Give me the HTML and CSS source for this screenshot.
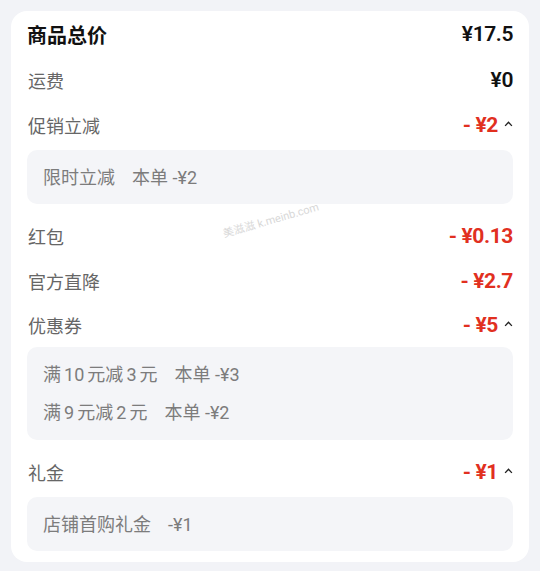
FILE: index.html
```html
<!DOCTYPE html>
<html lang="zh-CN">
<head>
<meta charset="utf-8">
<link rel="stylesheet" href="styles.css">
</head>
<body>
<div class="card">
  <div class="row row-title">
    <span class="title">商品总价</span>
    <span class="value">¥17.5</span>
  </div>
  <div class="row">
    <span class="label">运费</span>
    <span class="value">¥0</span>
  </div>
  <div class="row">
    <span class="label">促销立减</span>
    <span class="value red">- ¥2<svg class="chev" viewBox="0 0 8 5"><polyline points="1,4.2 4,1 7,4.2"/></svg></span>
  </div>
  <div class="panel">
    <div class="line">限时立减<span class="gap"></span>本单 -¥2</div>
  </div>
  <div class="row after-panel">
    <span class="label">红包</span>
    <span class="value red">- ¥0.13</span>
  </div>
  <div class="row">
    <span class="label">官方直降</span>
    <span class="value red">- ¥2.7</span>
  </div>
  <div class="row row-short">
    <span class="label">优惠券</span>
    <span class="value red">- ¥5<svg class="chev" viewBox="0 0 8 5"><polyline points="1,4.2 4,1 7,4.2"/></svg></span>
  </div>
  <div class="panel tight">
    <div class="line">满&#8198;10&#8198;元减&#8198;3&#8198;元<span class="gap"></span>本单 -¥3</div>
    <div class="line">满&#8198;9&#8198;元减&#8198;2&#8198;元<span class="gap"></span>本单 -¥2</div>
  </div>
  <div class="row after-panel">
    <span class="label">礼金</span>
    <span class="value red">- ¥1<svg class="chev" viewBox="0 0 8 5"><polyline points="1,4.2 4,1 7,4.2"/></svg></span>
  </div>
  <div class="panel">
    <div class="line">店铺首购礼金<span class="gap"></span>-¥1</div>
  </div>
  <div class="watermark">美滋滋 k.meinb.com</div>
</div>
</body>
</html>
```
FILE: styles.css
```css
* { box-sizing: border-box; }
html, body { margin: 0; }
body {
  background: #f2f3f7;
  padding: 11px;
  font-family: Roboto, "Noto Sans CJK SC", sans-serif;
}
.card {
  position: relative;
  background: #fff;
  border-radius: 16px;
  padding: 0 16px 11px;
  width: 518px;
}
.row {
  height: 45px;
  display: flex;
  align-items: center;
  justify-content: space-between;
}
.row.row-title { height: 46px; }
.row.row-short { height: 43px; }
.row.after-panel { margin-top: 9px; }
.title {
  font-size: 20px;
  font-weight: 700;
  color: #111;
}
.label {
  font-size: 18px;
  color: #666;
  padding-left: 1px;
}
.value {
  display: flex;
  align-items: center;
  font-size: 21px;
  font-weight: 600;
  color: #111;
  letter-spacing: -0.4px;
}
.value.red { color: #e1301f; font-weight: 700; }
.chev {
  width: 9px;
  height: 6px;
  margin-left: 6px;
  margin-top: -2px;
  fill: none;
  stroke: #222;
  stroke-width: 1.2;
}
.panel {
  background: #f4f5f8;
  border-radius: 10px;
  padding: 9px 16px 7px;
  margin-top: 3px;
}
.panel.tight { margin-top: 1px; padding: 9px 16px 8px; }
.line {
  height: 38px;
  line-height: 38px;
  font-size: 18px;
  color: #7c7c7c;
}
.gap { display: inline-block; width: 17px; }
.watermark {
  position: absolute;
  left: 210px;
  top: 200px;
  font-size: 11px;
  color: #d8d8d8;
  transform: rotate(-16deg);
  white-space: nowrap;
}
```
